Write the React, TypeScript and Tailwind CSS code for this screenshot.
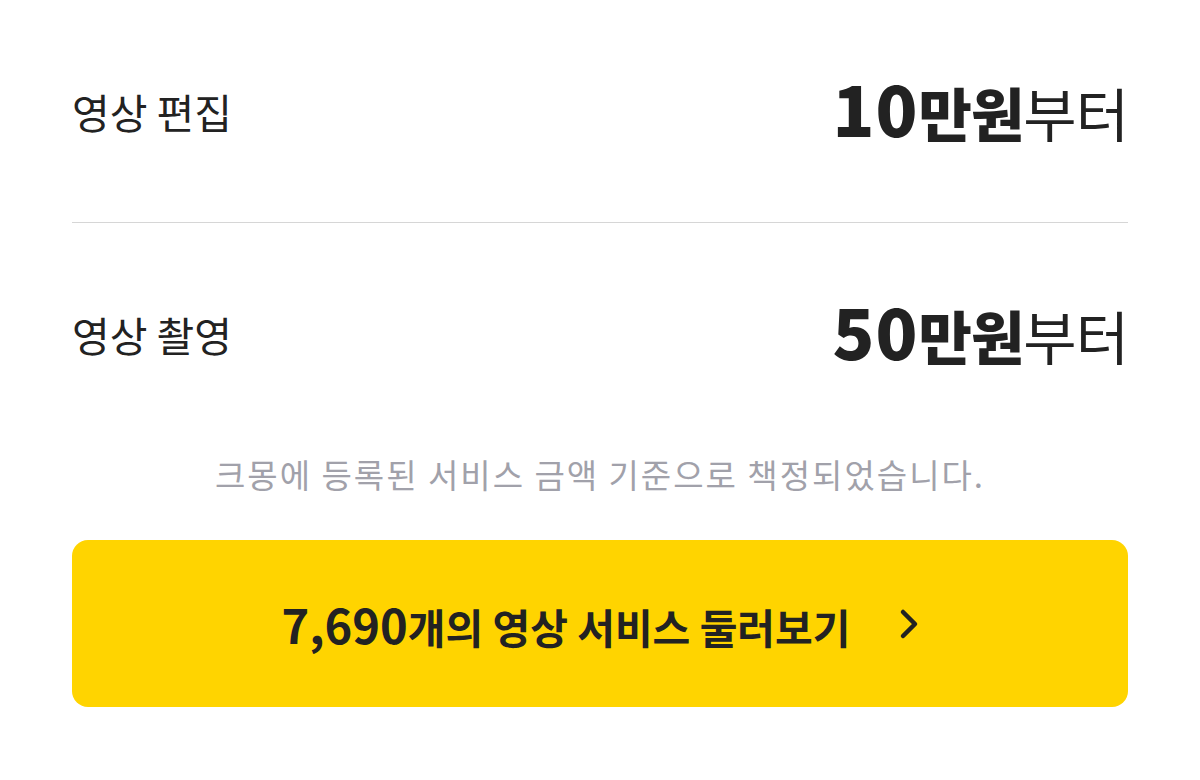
export default function App() {
  const font = { fontFamily: '"Noto Sans CJK KR", "Noto Sans", sans-serif' };
  return (
    <div className="w-[1200px] h-[780px] bg-white px-[72px] text-[#222]" style={font}>
      <div className="h-[223px] flex items-center justify-between border-b border-[#d6d6d6]">
        <span className="text-[41px] leading-none">영상 편집</span>
        <span className="pb-[8px] text-[58px] leading-none tracking-[-1px]">
          <b className="font-extrabold">
            <span className="text-[69px] tracking-[1px]">10</span>만원
          </b>
          부터
        </span>
      </div>
      <div className="h-[223px] flex items-center justify-between">
        <span className="text-[41px] leading-none">영상 촬영</span>
        <span className="pb-[8px] text-[58px] leading-none tracking-[-1px]">
          <b className="font-extrabold">
            <span className="text-[69px] tracking-[1px]">50</span>만원
          </b>
          부터
        </span>
      </div>
      <p className="mt-[8px] text-center text-[33px] leading-[40px] tracking-[2px] text-[#a1a1aa]">
        크몽에 등록된 서비스 금액 기준으로 책정되었습니다.
      </p>
      <button className="mt-[46px] w-full h-[167px] rounded-[16px] bg-[#ffd400] flex items-center justify-center gap-[48px]">
        <span className="text-[41px] font-bold leading-none text-[#222]">
          <span className="text-[47px]">7,690</span>개의 영상 서비스 둘러보기
        </span>
        <svg width="20" height="32" viewBox="0 0 20 32" fill="none">
          <path d="M4 4l12 12-12 12" stroke="#222" strokeWidth="4.5" strokeLinecap="round" strokeLinejoin="round" />
        </svg>
      </button>
    </div>
  );
}
